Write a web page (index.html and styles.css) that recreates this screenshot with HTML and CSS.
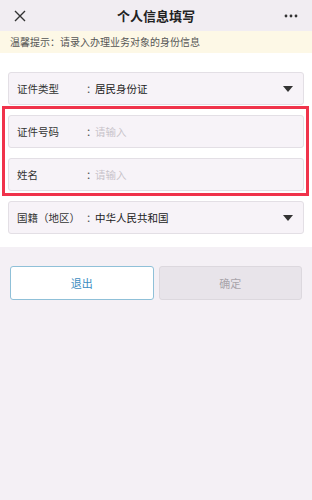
FILE: index.html
```html
<!DOCTYPE html>
<html lang="zh-CN">
<head>
  <meta charset="UTF-8">
  <meta name="viewport" content="width=device-width, initial-scale=1.0">
  <title>个人信息填写</title>
  <link rel="stylesheet" href="styles.css">
</head>
<body>
  <header class="nav">
    <span class="nav-close">
      <svg width="12" height="12" viewBox="0 0 12 12"><path d="M1 1L11 11M11 1L1 11" stroke="#333" stroke-width="1.4" fill="none"/></svg>
    </span>
    <h1>个人信息填写</h1>
    <span class="nav-more">
      <svg width="14" height="4" viewBox="0 0 14 4"><circle cx="2" cy="2" r="1.4" fill="#333"/><circle cx="7" cy="2" r="1.4" fill="#333"/><circle cx="12" cy="2" r="1.4" fill="#333"/></svg>
    </span>
  </header>

  <div class="tip">温馨提示：请录入办理业务对象的身份信息</div>

  <div class="form">
    <!-- 证件类型 -->
    <div class="field">
      <span class="label">证件类型</span>
      <span class="colon">：</span>
      <span class="value">居民身份证</span>
      <span class="arrow"></span>
    </div>

    <div class="field">
      <span class="label">证件号码</span>
      <span class="colon">：</span>
      <span class="value placeholder">请输入</span>
    </div>

    <div class="field">
      <span class="label">姓名</span>
      <span class="colon">：</span>
      <span class="value placeholder">请输入</span>
    </div>

    <div class="field">
      <span class="label">国籍（地区）</span>
      <span class="colon">：</span>
      <span class="value">中华人民共和国</span>
      <span class="arrow"></span>
    </div>

    <!-- highlight frame -->
    <div class="highlight"></div>
  </div>

  <div class="actions">
    <button class="btn btn-exit">退出</button>
    <button class="btn btn-ok">确定</button>
  </div>
</body>
</html>
```

FILE: styles.css
```css
body {
  margin: 0;
  padding: 0;
  height: 500px;
  background-color: #f4f0f5;
  font-family: "Noto Sans CJK SC", "Noto Sans", sans-serif;
  color: #333;
}

.nav {
  height: 31px;
  background-color: #f1edf2;
  display: flex;
  align-items: center;
  justify-content: space-between;
  padding: 0 14px;
}

.nav h1 {
  margin: 0;
  font-size: 13px;
  font-weight: bold;
  color: #222;
}

.nav-close, .nav-more {
  display: flex;
  align-items: center;
  width: 16px;
}

.nav-more {
  justify-content: flex-end;
}

.tip {
  height: 22px;
  line-height: 22px;
  background-color: #fdf8e6;
  font-size: 10px;
  color: #555;
  padding-left: 10px;
}

.form {
  position: relative;
  background-color: #fff;
  padding: 19px 8px 13px;
  display: flex;
  flex-direction: column;
  gap: 10px;
}

.field {
  height: 31px;
  display: flex;
  align-items: center;
  background-color: #f7f3f8;
  border: 1px solid #e3dfe5;
  border-radius: 3px;
  padding: 0 10px 0 8px;
  font-size: 10.5px;
}

.label {
  width: 69px;
  color: #333;
}

.colon {
  width: 9px;
  color: #555;
}

.value {
  flex: 1;
  color: #222;
}

.placeholder {
  color: #c8c3ca;
}

.arrow {
  width: 0;
  height: 0;
  border-left: 5px solid transparent;
  border-right: 5px solid transparent;
  border-top: 6px solid #333;
}

.highlight {
  position: absolute;
  left: 2px;
  top: 53px;
  width: 301px;
  height: 84px;
  border: 3.5px solid #f0334b;
}

.actions {
  display: flex;
  gap: 5px;
  padding: 19px 10px 0;
}

.btn {
  flex: 1;
  height: 34px;
  border-radius: 3px;
  font-family: inherit;
  font-size: 11px;
}

.btn-exit {
  background-color: #fff;
  border: 1.5px solid #8fc0d8;
  color: #3d8dbf;
}

.btn-ok {
  background-color: #e8e4ea;
  border: 1px solid #dcd8de;
  color: #a9a5ab;
}
```
